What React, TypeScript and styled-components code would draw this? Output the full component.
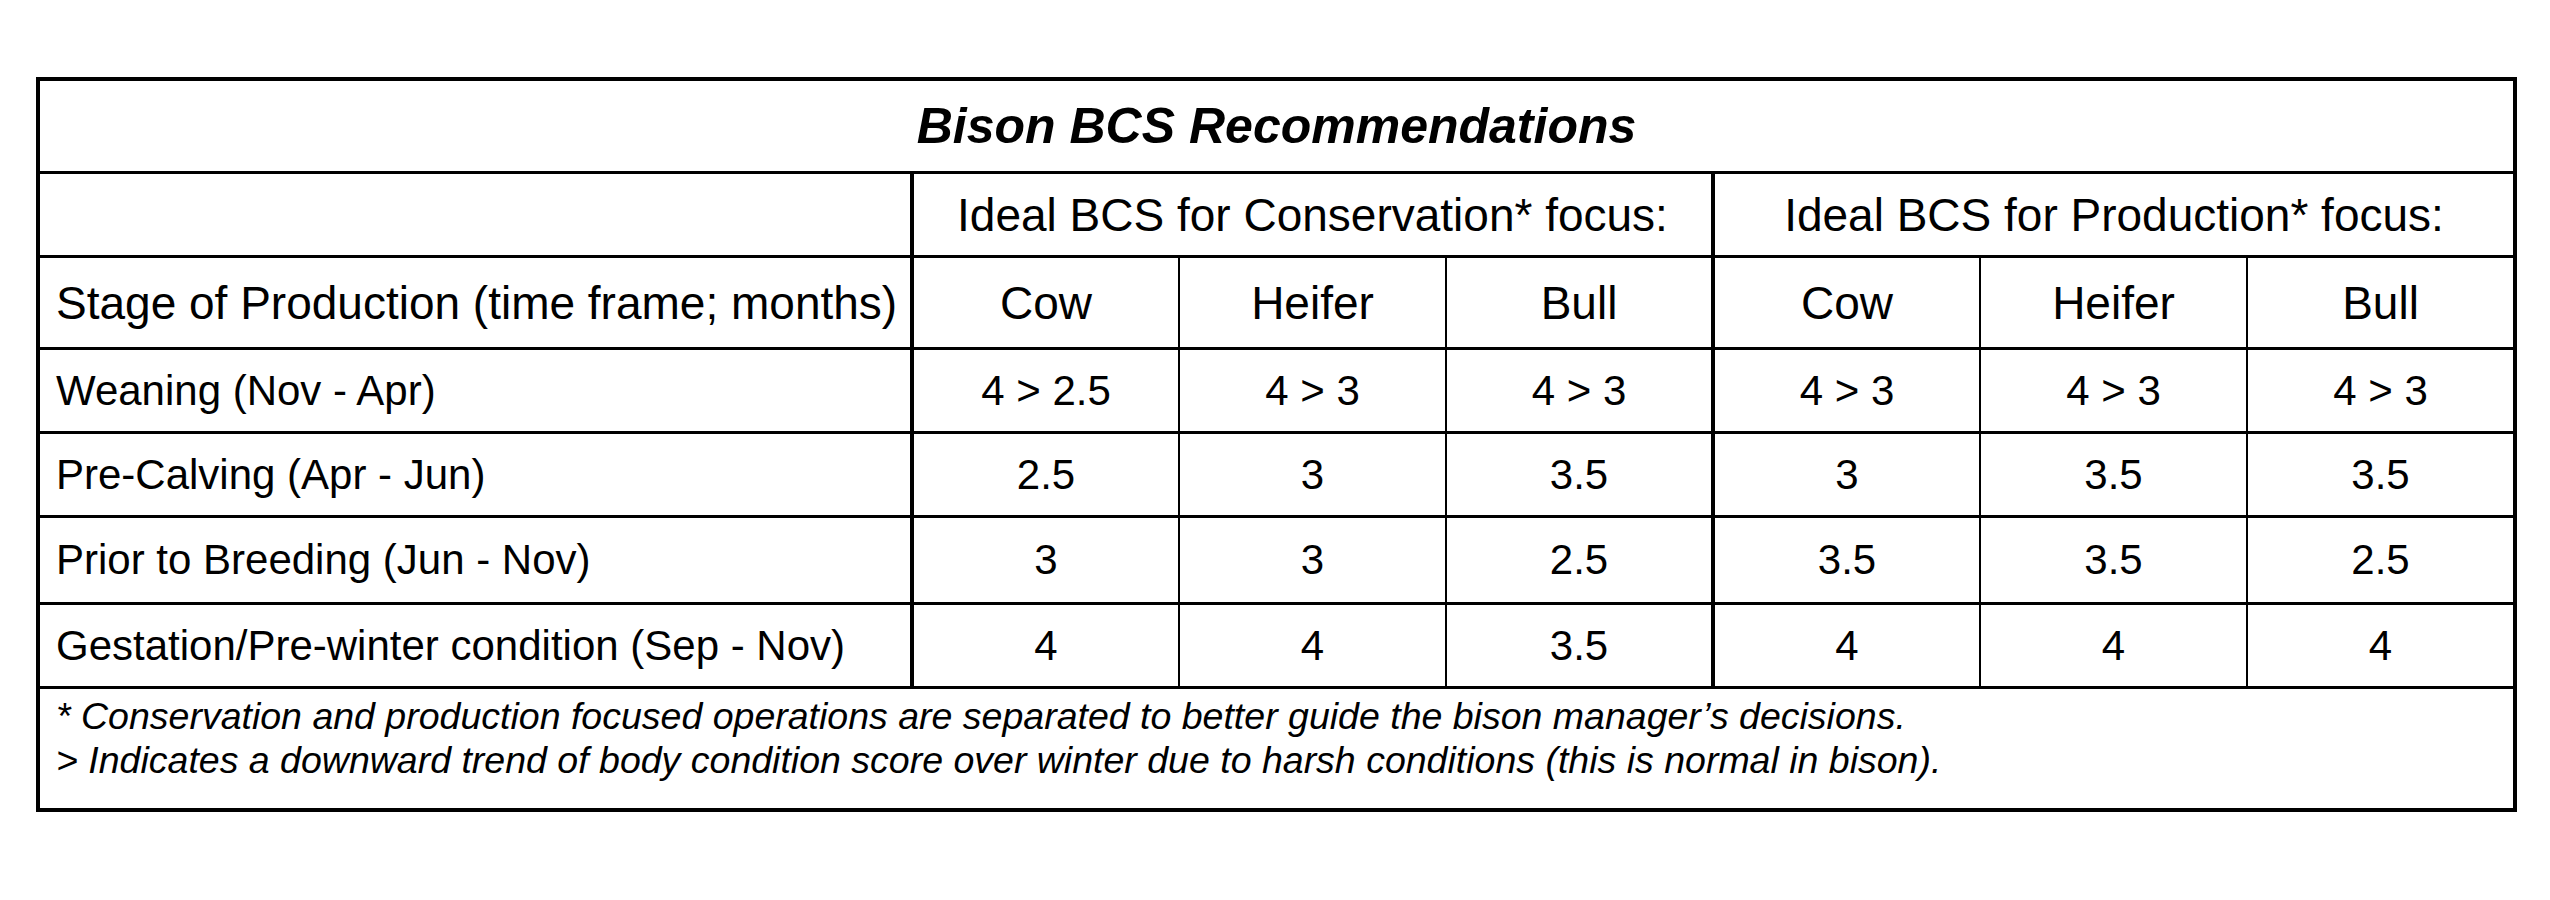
import React from 'react';
import styled, { createGlobalStyle, css } from 'styled-components';


const GlobalStyle = createGlobalStyle`
  html, body {
    margin: 0;
    padding: 0;
    background: #ffffff;
  }

  body {
    font-family: "Liberation Sans", Arial, sans-serif;
    color: #000000;
  }
`;

type Edge = 'thin' | 'thick' | 'none';

const Page = styled.div`
  display: block;
  padding: 77px 0 0 36px;
  width: 2550px;
  height: 900px;
  box-sizing: border-box;
`;

const Table = styled.div`
  display: grid;
  grid-template-columns: 874px 266px 267px 268px 266px 267px 265px;
  grid-template-rows: 93px 84px 92px 84px 84px 87px 84px 119px;
  width: 2481px;
  box-sizing: border-box;
  border: 4px solid #000000;
`;

const Cell = styled.div<{ $edge: Edge; $span?: number; $last?: boolean }>`
  display: flex;
  align-items: center;
  justify-content: center;
  box-sizing: border-box;
  grid-column: span ${props => props.$span || 1};
  border-bottom: ${props => (props.$last ? '0' : '3px solid #000000')};
  border-right: ${props =>
    props.$edge === 'thick' ? '4px solid #000000' : props.$edge === 'thin' ? '2px solid #000000' : '0'};
  white-space: nowrap;
`;

const TitleCell = styled(Cell)`
  font-size: 50px;
  font-weight: 700;
  font-style: italic;
`;

const HeadCell = styled(Cell)<{ $left?: boolean }>`
  font-size: 46px;
  ${props => props.$left && css`
    justify-content: flex-start;
    padding-left: 16px;
  `}
`;

const ValueCell = styled(Cell)<{ $left?: boolean }>`
  font-size: 42px;
  ${props => props.$left && css`
    justify-content: flex-start;
    padding-left: 16px;
  `}
`;

const NotesCell = styled(Cell)`
  display: block;
  padding: 5px 0 0 16px;
  font-size: 37.5px;
  font-style: italic;
  line-height: 44px;
`;

const NoteLine = styled.div`
  display: block;
`;


const animals = ['Cow', 'Heifer', 'Bull'];
const edges: Edge[] = ['thin', 'thin', 'thick', 'thin', 'thin', 'none'];

const stages = [
  { name: 'Weaning (Nov - Apr)', values: ['4 > 2.5', '4 > 3', '4 > 3', '4 > 3', '4 > 3', '4 > 3'] },
  { name: 'Pre-Calving (Apr - Jun)', values: ['2.5', '3', '3.5', '3', '3.5', '3.5'] },
  { name: 'Prior to Breeding (Jun - Nov)', values: ['3', '3', '2.5', '3.5', '3.5', '2.5'] },
  { name: 'Gestation/Pre-winter condition (Sep - Nov)', values: ['4', '4', '3.5', '4', '4', '4'] },
];


function App() {
  return (
    <Page>
      <GlobalStyle />
      <Table>
        <TitleCell $edge={'none'} $span={7}>Bison BCS Recommendations</TitleCell>

        <HeadCell $edge={'thick'} />
        <HeadCell $edge={'thick'} $span={3}>Ideal BCS for Conservation* focus:</HeadCell>
        <HeadCell $edge={'none'} $span={3}>Ideal BCS for Production* focus:</HeadCell>

        <HeadCell $edge={'thick'} $left>Stage of Production (time frame; months)</HeadCell>
        { [...animals, ...animals].map((animal, i) => (
          <HeadCell key={i} $edge={edges[i]}>{ animal }</HeadCell>
        )) }

        { stages.map(stage => (
          <React.Fragment key={stage.name}>
            <ValueCell $edge={'thick'} $left>{ stage.name }</ValueCell>
            { stage.values.map((value, i) => (
              <ValueCell key={i} $edge={edges[i]}>{ value }</ValueCell>
            )) }
          </React.Fragment>
        )) }

        <NotesCell $edge={'none'} $span={7} $last>
          <NoteLine>* Conservation and production focused operations are separated to better guide the bison manager’s decisions.</NoteLine>
          <NoteLine>&gt; Indicates a downward trend of body condition score over winter due to harsh conditions (this is normal in bison).</NoteLine>
        </NotesCell>
      </Table>
    </Page>
  );
}

export default App;
